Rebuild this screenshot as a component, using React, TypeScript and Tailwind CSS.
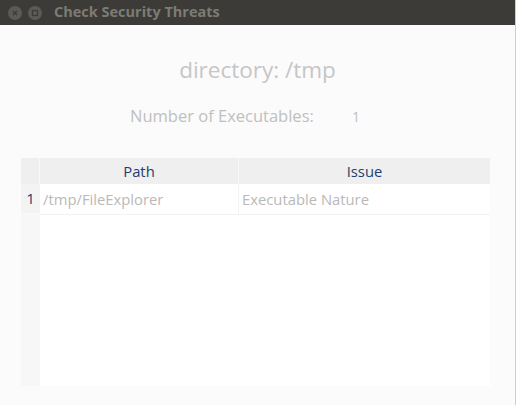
import React from "react";

export default function App() {
  const font = { fontFamily: '"Open Sans", "Noto Sans", sans-serif' };
  return (
    <div className="w-[516px] h-[405px] flex bg-white overflow-hidden" style={font}>
      <div className="w-[515px] h-full flex flex-col">
        <div className="h-[25px] bg-[#3c3b37] flex items-center pl-[8px] shrink-0">
          <div className="w-[14px] h-[14px] rounded-full bg-[#5b5a56] flex items-center justify-center">
            <svg width="8" height="8" viewBox="0 0 8 8">
              <path d="M2 2 L6 6 M6 2 L2 6" stroke="#3c3b37" strokeWidth="1.3" />
            </svg>
          </div>
          <div className="ml-[6px] w-[14px] h-[14px] rounded-full bg-[#5b5a56] flex items-center justify-center">
            <svg width="8" height="8" viewBox="0 0 8 8">
              <rect x="1.5" y="1.5" width="5" height="5" fill="none" stroke="#3c3b37" strokeWidth="1.2" />
            </svg>
          </div>
          <div className="ml-[12px] text-[14.5px] font-bold text-[#7c7b76] leading-none">Check Security Threats</div>
        </div>
        <div className="flex-1 bg-[#fbfbfb] flex flex-col">
          <div className="mt-[29px] h-[32px] flex items-center justify-center text-[22.5px] text-[#c6c6c6]">
            directory: /tmp
          </div>
          <div className="mt-[18px] h-[24px] flex items-center text-[16.5px] text-[#c0c0c0]">
            <span className="ml-[130px] w-[222px]">Number of Executables:</span>
            <span className="text-[14px]">1</span>
          </div>
          <div className="mt-[30px] ml-[21px] w-[469px] h-[228px] bg-white flex flex-col">
            <div className="h-[26px] flex bg-[#efefef] text-[14.8px] text-[#1f3d6e]">
              <div className="w-[19px] border-r border-[#f8f8f8]"></div>
              <div className="w-[199px] border-r border-[#f8f8f8] flex items-center justify-center">Path</div>
              <div className="flex-1 flex items-center justify-center">Issue</div>
            </div>
            <div className="flex-1 flex">
              <div className="w-[19px] bg-[#f7f7f7] flex flex-col">
                <div className="h-[30px] flex items-center justify-center text-[15px] text-[#1f3d6e] bg-[#f3f3f3] border-b border-[#fafafa]">1</div>
              </div>
              <div className="flex-1 flex flex-col">
                <div className="h-[31px] flex border-b border-[#f3f3f3] text-[14.8px] text-[#b9b9b9]">
                  <div className="w-[199px] border-r border-[#f3f3f3] flex items-center pl-[3px]">/tmp/FileExplorer</div>
                  <div className="flex-1 flex items-center pl-[3px]">Executable Nature</div>
                </div>
              </div>
            </div>
          </div>
        </div>
      </div>
      <div className="w-[1px] h-full bg-[#cdcdcd]"></div>
    </div>
  );
}
